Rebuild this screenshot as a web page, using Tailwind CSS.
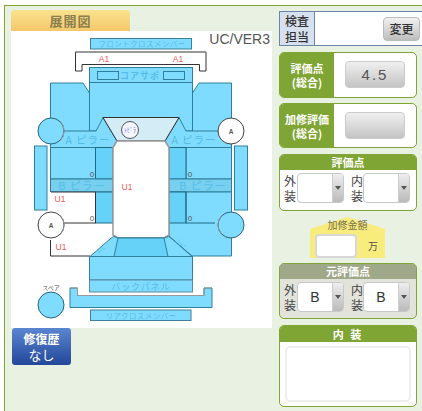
<!DOCTYPE html>
<html lang="ja">
<head>
<meta charset="UTF-8">
<script src="https://cdn.jsdelivr.net/npm/@tailwindcss/browser@4"></script>
<title>展開図</title>
</head>
<body class="bg-white overflow-hidden font-['Noto_Sans_CJK_JP','Liberation_Sans',sans-serif]">
<div class="ml-[4px] mt-[5px] w-[418px] h-[406px] border-l border-t border-[#7fa534] bg-[#e9f1e2] flex pl-[6px] pt-[4px] gap-[7px]">

  <!-- left: diagram -->
  <div class="w-[261px] shrink-0">
    <div class="w-[119px] h-[21px] rounded-t-[4px] bg-gradient-to-b from-[#f9e28e] to-[#f5c86c] flex items-center justify-center text-[13px] font-bold text-[#8a7f4f] tracking-[1px]">展開図</div>
    <div class="relative w-[261px] h-[297px] bg-white">
      <span class="absolute right-[2px] top-[-2px] font-['Liberation_Sans'] text-[14px] text-[#555]">UC/VER3</span>
      <svg class="absolute left-0 top-0" width="261" height="297" viewBox="11 31 261 297" stroke="#2f7f9a" stroke-width="1" fill="#7fdcff">
        <rect x="90.5" y="38.5" width="101" height="10.5" stroke="#3f7f99"/>
        <path d="M75.5 71V52H206V71H199.5V64.5H82V71Z" fill="#fff" stroke="#333"/>
        <path d="M75.5 52H206" fill="none" stroke="#999"/>
        <rect x="89.5" y="67.5" width="103" height="15"/>
        <rect x="97.5" y="71.5" width="21" height="8" fill="none"/>
        <rect x="163.5" y="71.5" width="21" height="8" fill="none"/>
        <!-- body -->
        <path d="M50.5 83H83L89.5 93V131H96L103 117.5H179L186 131H192.5V93L199 83H231.5V147.5H50.5Z"/>
        <rect x="89.5" y="82.5" width="103" height="48.5"/>
        <path d="M50.5 131H96L103 117.5L117 141L113 147.5H50.5Z"/>
        <path d="M231.5 131H186L179 117.5L165 141L169 147.5H231.5Z"/>
        <path d="M103 117.5H179L165 141H117Z" fill="#d4ecf5" stroke="#333"/>
        <!-- left side -->
        <rect x="34.5" y="146" width="12.5" height="64"/>
        <rect x="234.5" y="146" width="13" height="64"/>
        <rect x="50.5" y="147.5" width="45" height="31.5"/>
        <rect x="95.5" y="147.5" width="17.5" height="31.5" fill="#66d2f8" stroke="#1d6a86"/>
        <rect x="50.5" y="179" width="62.5" height="13" fill="#77d0ef"/>
        <rect x="95.5" y="192" width="17.5" height="31" fill="#66d2f8" stroke="#1d6a86"/>
        <path d="M50.5 192H95.5V223H62" fill="#fff" stroke="#333"/>
        <path d="M50.5 192V215" fill="none" stroke="#fff"/>
        <path d="M50.5 240V256H90" fill="none" stroke="#333"/>
        <!-- right side -->
        <rect x="186" y="147.5" width="45.5" height="31.5"/>
        <rect x="169" y="147.5" width="17" height="31.5" fill="#66d2f8" stroke="#1d6a86"/>
        <rect x="169" y="179" width="62.5" height="13" fill="#77d0ef"/>
        <path d="M186 192H231.5V256H192L169 236V192Z"/>
        <rect x="169" y="192" width="17" height="31" fill="#66d2f8" stroke="#1d6a86"/>
        <path d="M186 192V223H215" fill="none" stroke="#1d6a86"/>
        <!-- roof -->
        <path d="M117 141H165L169 147.5V235L164 238H118L113 235V147.5Z" fill="#fff" stroke="#999" stroke-width="1.5"/>
        <!-- rear -->
        <path d="M90 256.5L110 239L113.5 236.5L118 238H164L168.5 236.5L172 239L192 256.5V280H90Z"/>
        <path d="M118 238H164L168 256.5H114Z" fill="#66d2f8"/>
        <rect x="89.5" y="256.5" width="103" height="23.5"/>
        <rect x="89.5" y="280" width="103" height="12" stroke="#5a8aa0"/>
        <path d="M70 288H77.5V295.5H204V288H212V307.5H70Z"/>
        <path d="M70 288H77.5V295.5H204V288H212" fill="none" stroke="#999"/>
        <rect x="90.5" y="310" width="100.5" height="10.5" stroke="#3f7f99"/>
        <!-- circles -->
        <circle cx="130" cy="130" r="8.5" fill="#f4f6ff" stroke="#555"/>
        <circle cx="51" cy="131" r="13" stroke="#2a6478"/>
        <path d="M60 121A14 14 0 0 1 60 141" fill="none" stroke="#999"/>
        <circle cx="231" cy="131" r="13" fill="#fff" stroke="#444"/>
        <circle cx="51" cy="225" r="13" fill="#fff" stroke="#444"/>
        <path d="M60 215A14 14 0 0 1 60 235" fill="none" stroke="#999"/>
        <circle cx="231" cy="225" r="13" stroke="#2a6478"/>
        <path d="M222 215A14 14 0 0 0 222 235" fill="none" stroke="#999"/>
        <circle cx="51" cy="305" r="13" stroke="#2a6478"/>
        <g stroke="none" font-family="Noto Sans CJK JP, sans-serif" text-anchor="middle">
          <g fill="#55bde6" font-size="7.5">
            <text x="142" y="47" letter-spacing=".4">フロントクロスメンバー</text>
            <text x="140" y="79" font-size="9" font-weight="bold" letter-spacing="1">コアサポ</text>
            <text x="141" y="290" font-size="9" letter-spacing="1">バックパネル</text>
            <text x="141" y="319" letter-spacing=".4">リアクロスメンバー</text>
            <text x="88" y="144" font-size="10.5" letter-spacing="1">A ピラー</text>
            <text x="194" y="144" font-size="10.5" letter-spacing="1">A ピラー</text>
            <text x="82" y="190" font-size="11" letter-spacing="1">B ピラー</text>
            <text x="203" y="190" font-size="11" letter-spacing="1">B ピラー</text>
            <text x="0" y="0" font-size="6" transform="translate(103 250) rotate(-45)">ｺﾝﾋﾞ</text>
            <text x="0" y="0" font-size="6" transform="translate(179 246) rotate(45)">ｺﾝﾋﾞ</text>
          </g>
          <g fill="#f05a5a" font-size="8.5" font-family="Liberation Sans, sans-serif">
            <text x="104" y="62">A1</text>
            <text x="178" y="62">A1</text>
            <text x="127" y="190">U1</text>
            <text x="60" y="202">U1</text>
            <text x="61" y="250">U1</text>
          </g>
          <g fill="#555" font-size="8" font-family="Liberation Sans, sans-serif">
            <text x="231" y="134" font-size="6.5" font-weight="bold">A</text>
            <text x="51" y="228" font-size="6.5" font-weight="bold">A</text>
            <text x="92" y="177">0</text>
            <text x="92" y="221">0</text>
            <text x="190" y="177">0</text>
            <text x="190" y="221">0</text>
          </g>
          <text x="130" y="132" font-size="6" fill="#7070f0">ﾄﾋﾟﾗ</text>
          <text x="51" y="290" font-size="6" fill="#555">スペア</text>
        </g>
      </svg>
    </div>
    <div class="ml-[1px] w-[59px] h-[37px] rounded-[3px] bg-gradient-to-b from-[#5b86d0] to-[#24479a] text-white text-center text-[12px] leading-[16px] pt-[3px]">
      <div class="font-bold">修復歴</div>
      <div class="text-[13px]">なし</div>
    </div>
  </div>

  <!-- right: scores -->
  <div class="flex-1 pt-[1px] flex flex-col text-[#444]">
    <div class="h-[35px] flex items-center border border-[#6b85a8] border-r-0 bg-white -mr-px">
      <div class="w-[35px] h-full shrink-0 bg-[#d7e0ee] border-r border-[#6b85a8] text-center text-[12px] font-medium leading-[16px] pt-px text-[#333]">検査<br>担当</div>
      <div class="ml-auto mr-[3px] w-[37px] h-[24px] rounded-[4px] border border-[#bbb] bg-gradient-to-b from-[#f2f2f2] to-[#bdbdbd] text-center text-[12px] font-medium leading-[22px] text-[#333]">変更</div>
    </div>

    <div class="mt-[6px] w-[138px] h-[46px] flex rounded-[5px] border border-[#7fa534] bg-white overflow-hidden">
      <div class="w-[54px] bg-[#7fa534] text-white text-center text-[11px] font-bold leading-[14px] pt-[8px]">評価点<br>(総合)</div>
      <div class="ml-[11px] mt-[8px] w-[60px] h-[27px] rounded-[4px] border border-[#ccc] bg-gradient-to-b from-[#f0f0f0] to-[#c4c4c4] text-center text-[15px] tracking-[2px] leading-[25px] text-[#555] font-['Liberation_Sans']">4.5</div>
    </div>

    <div class="mt-[5px] w-[138px] h-[45px] flex rounded-[5px] border border-[#7fa534] bg-white overflow-hidden">
      <div class="w-[54px] bg-[#7fa534] text-white text-center text-[11px] font-bold leading-[14px] pt-[8px]">加修評価<br>(総合)</div>
      <div class="ml-[11px] mt-[8px] w-[60px] h-[27px] rounded-[4px] border border-[#ccc] bg-gradient-to-b from-[#f0f0f0] to-[#c4c4c4]"></div>
    </div>

    <div class="mt-[6px] w-[138px] h-[57px] rounded-[5px] border border-[#7fa534] bg-white overflow-hidden">
      <div class="h-[15px] bg-[#7fa534] text-white text-center text-[11px] font-bold leading-[15px]">評価点</div>
      <div class="flex pl-[4px] pt-[3px]">
        <div class="w-[13px] text-[12px] leading-[15px]">外装</div>
        <div class="w-[47px] h-[30px] flex rounded-[4px] border border-[#c8c8c8] bg-white overflow-hidden">
          <div class="flex-1"></div>
          <div class="w-[11px] bg-gradient-to-b from-[#eee] to-[#bbb] border-l border-[#ccc] flex items-center justify-center"><div class="w-0 h-0 border-x-[3px] border-x-transparent border-t-[4px] border-t-[#555]"></div></div>
        </div>
        <div class="ml-[7px] w-[12px] text-[12px] leading-[15px]">内装</div>
        <div class="w-[47px] h-[30px] flex rounded-[4px] border border-[#c8c8c8] bg-white overflow-hidden">
          <div class="flex-1"></div>
          <div class="w-[11px] bg-gradient-to-b from-[#eee] to-[#bbb] border-l border-[#ccc] flex items-center justify-center"><div class="w-0 h-0 border-x-[3px] border-x-transparent border-t-[4px] border-t-[#555]"></div></div>
        </div>
      </div>
    </div>

    <div class="relative mt-[6px] ml-[31px] w-[75px] h-[41px]">
      <div class="absolute inset-0 bg-[#f8ec7c] [clip-path:polygon(0_12px,50%_0,100%_12px,100%_100%,0_100%)]"></div>
      <div class="relative text-center text-[10px] leading-[14px] pt-[1px] text-[#77704f]">加修金額</div>
      <div class="relative flex items-center">
        <div class="ml-[5px] mt-[2px] w-[42px] h-[24px] rounded-[4px] border-2 border-[#d8d8d8] bg-white"></div>
        <span class="ml-[11px] text-[10px] text-[#555]">万</span>
      </div>
    </div>

    <div class="mt-[5px] w-[138px] h-[56px] rounded-[5px] border border-[#7fa534] bg-[#e2e4dc] overflow-hidden">
      <div class="h-[15px] bg-[#9fa888] text-white text-center text-[11px] font-bold leading-[15px]">元評価点</div>
      <div class="flex pl-[4px] pt-[3px]">
        <div class="w-[13px] text-[12px] leading-[15px]">外装</div>
        <div class="w-[47px] h-[30px] flex rounded-[4px] border border-[#c8c8c8] bg-white overflow-hidden">
          <div class="flex-1 text-center text-[14px] leading-[28px] font-['Liberation_Sans'] text-[#333]">B</div>
          <div class="w-[11px] bg-gradient-to-b from-[#eee] to-[#bbb] border-l border-[#ccc] flex items-center justify-center"><div class="w-0 h-0 border-x-[3px] border-x-transparent border-t-[4px] border-t-[#555]"></div></div>
        </div>
        <div class="ml-[7px] w-[12px] text-[12px] leading-[15px]">内装</div>
        <div class="w-[47px] h-[30px] flex rounded-[4px] border border-[#c8c8c8] bg-white overflow-hidden">
          <div class="flex-1 text-center text-[14px] leading-[28px] font-['Liberation_Sans'] text-[#333]">B</div>
          <div class="w-[11px] bg-gradient-to-b from-[#eee] to-[#bbb] border-l border-[#ccc] flex items-center justify-center"><div class="w-0 h-0 border-x-[3px] border-x-transparent border-t-[4px] border-t-[#555]"></div></div>
        </div>
      </div>
    </div>

    <div class="mt-[6px] w-[138px] h-[82px] rounded-[5px] border border-[#7fa534] bg-white overflow-hidden">
      <div class="h-[16px] bg-[#7fa534] text-white text-center text-[11px] font-bold leading-[16px] tracking-[2px]">内 装</div>
      <div class="mx-[5px] mt-[4px] h-[56px] rounded-[5px] border-2 border-[#eeeeee] bg-white"></div>
    </div>
  </div>
</div>
</body>
</html>
